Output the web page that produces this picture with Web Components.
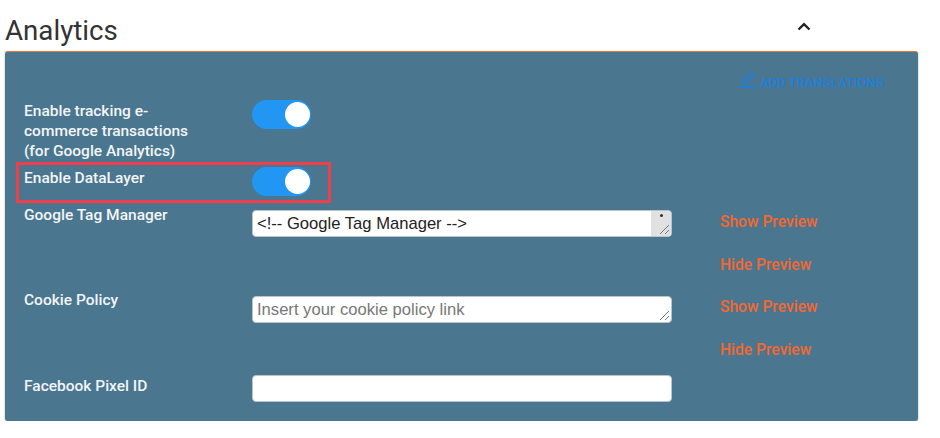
<!DOCTYPE html>
<html lang="en">
<head>
<meta charset="utf-8">
<title>Analytics</title>
<style>
  html, body { margin: 0; padding: 0; background: #fff; }
  body { font-family: Roboto, "Liberation Sans", sans-serif; }
</style>
</head>
<body>
<analytics-panel>
  <span slot="title">Analytics</span>
  <add-translations>ADD TRANSLATIONS</add-translations>

  <form-row style="--row-h:62px; --row-mt:12px">
    <span slot="label">Enable tracking e-commerce transactions (for Google Analytics)</span>
    <toggle-switch></toggle-switch>
  </form-row>

  <form-row style="--row-h:41px; --row-mt:5px" marked>
    <span slot="label">Enable DataLayer</span>
    <toggle-switch></toggle-switch>
  </form-row>

  <form-row style="--row-h:43px; --row-mt:2px; --label-mt:-5px">
    <span slot="label">Google Tag Manager</span>
    <text-box grip scrollbar>&lt;!-- Google Tag Manager --&gt;</text-box>
    <preview-link slot="action">Show Preview</preview-link>
  </form-row>

  <form-row style="--row-h:43px">
    <preview-link slot="action">Hide Preview</preview-link>
  </form-row>

  <form-row style="--row-h:43px; --label-mt:-6px; --action-mt:0px">
    <span slot="label">Cookie Policy</span>
    <text-box grip placeholder>Insert your cookie policy link</text-box>
    <preview-link slot="action">Show Preview</preview-link>
  </form-row>

  <form-row style="--row-h:36px; --action-mt:0px">
    <preview-link slot="action">Hide Preview</preview-link>
  </form-row>

  <form-row style="--row-h:27px">
    <span slot="label">Facebook Pixel ID</span>
    <text-box></text-box>
  </form-row>
</analytics-panel>

<script>
class AnalyticsPanel extends HTMLElement {
  constructor() {
    super();
    this.attachShadow({ mode: 'open' });
    this.shadowRoot.innerHTML = `
      <style>
        :host { display: block; width: 913px; margin-left: 5px; }
        header {
          height: 51px;
          display: flex;
          align-items: flex-end;
          justify-content: space-between;
        }
        h2 {
          margin: 0 0 4px;
          font: 400 27.7px/32px Roboto, "Liberation Sans", sans-serif;
          color: #333;
        }
        svg { display: block; margin: 0 107px 20px 0; }
        section {
          box-sizing: border-box;
          height: 370px;
          padding: 0 19px;
          background: #4a768f;
          border-top: 1px solid #e8762f;
          border-radius: 3px;
          box-shadow: 0 1px 1px rgba(0,0,0,.2), 1px 0 1px rgba(0,0,0,.08), -1px 0 1px rgba(0,0,0,.08);
        }
      </style>
      <header>
        <h2><slot name="title"></slot></h2>
        <svg width="14" height="9" viewBox="0 0 14 9" aria-hidden="true">
          <path d="M1.5 7.5 7 2.2l5.5 5.3" fill="none" stroke="#222" stroke-width="2.4"/>
        </svg>
      </header>
      <section><slot></slot></section>
    `;
  }
}

class AddTranslations extends HTMLElement {
  constructor() {
    super();
    this.attachShadow({ mode: 'open' });
    this.shadowRoot.innerHTML = `
      <style>
        :host {
          display: flex;
          justify-content: flex-end;
          align-items: flex-end;
          gap: 4px;
          height: 36px;
          padding: 0 15px 0 0;
          font: 500 13.1px/16px Roboto, "Liberation Sans", sans-serif;
          color: #1f7fdb;
        }
        svg { display: block; }
        span { margin-bottom: -3px; }
      </style>
      <svg width="15" height="17" viewBox="0 0 15 17" aria-hidden="true">
        <path d="M1.5 13V9.8L9.8 1.5l3 3L4.6 13z" fill="none" stroke="#1f7fdb" stroke-width="1.6"/>
        <path d="M0 16h15" stroke="#1f7fdb" stroke-width="1.8"/>
      </svg>
      <span><slot></slot></span>
    `;
  }
}

class FormRow extends HTMLElement {
  constructor() {
    super();
    this.attachShadow({ mode: 'open' });
    this.shadowRoot.innerHTML = `
      <style>
        :host {
          display: grid;
          grid-template-columns: 228px 420px auto;
          column-gap: 0;
          height: var(--row-h, 40px);
          margin-top: var(--row-mt, 0);
          position: relative;
        }
        .label {
          width: 172px;
          margin-top: var(--label-mt, 1px);
          font: 500 15.5px/20px Roboto, "Liberation Sans", sans-serif;
          color: #f2f5f7;
        }
        .action { padding-left: 48px; margin-top: var(--action-mt, 1px); }
        .mark {
          display: none;
          position: absolute;
          left: -8px;
          top: -5px;
          width: 315px;
          height: 41px;
          box-sizing: border-box;
          border: 3px solid #ee3f4a;
        }
        :host([marked]) .mark { display: block; }
      </style>
      <div class="label"><slot name="label"></slot></div>
      <div><slot></slot></div>
      <div class="action"><slot name="action"></slot></div>
      <div class="mark"></div>
    `;
  }
}

class ToggleSwitch extends HTMLElement {
  constructor() {
    super();
    this.attachShadow({ mode: 'open' });
    this.shadowRoot.innerHTML = `
      <style>
        :host {
          display: flex;
          justify-content: flex-end;
          align-items: center;
          box-sizing: border-box;
          width: 59px;
          height: 29px;
          padding-right: 1px;
          border-radius: 15px;
          background: #2196f3;
        }
        i {
          display: block;
          width: 25px;
          height: 25px;
          border-radius: 50%;
          background: #fff;
        }
      </style>
      <i></i>
    `;
  }
}

class TextBox extends HTMLElement {
  constructor() {
    super();
    this.attachShadow({ mode: 'open' });
    const bar = this.hasAttribute('scrollbar') ? `
      <div class="bar"><b></b></div>` : '';
    const grip = this.hasAttribute('grip') ? `
      <svg class="grip" width="11" height="11" viewBox="0 0 11 11" aria-hidden="true">
        <path d="M1 10 10 1M6 10l4-4" stroke="#777" stroke-width="1" fill="none"/>
      </svg>` : '';
    this.shadowRoot.innerHTML = `
      <style>
        :host {
          display: block;
          position: relative;
          box-sizing: border-box;
          width: 420px;
          height: 27px;
          padding: 0 4px;
          background: #fff;
          border: 1px solid #b9c4cb;
          border-radius: 4px;
          font: 400 16.6px/26px "Liberation Sans", Arial, sans-serif;
          color: #222;
          overflow: hidden;
        }
        :host([placeholder]) { color: #777; }
        .bar {
          position: absolute;
          right: 0;
          top: 0;
          width: 20px;
          height: 100%;
          background: #e1e1e1;
        }
        .bar b {
          position: absolute;
          left: 9px;
          top: 3px;
          width: 3px;
          height: 3px;
          border-radius: 50%;
          background: #333;
        }
        .grip { position: absolute; right: 1px; bottom: 1px; }
      </style>
      <slot></slot>${bar}${grip}
    `;
  }
}

class PreviewLink extends HTMLElement {
  constructor() {
    super();
    this.attachShadow({ mode: 'open' });
    this.shadowRoot.innerHTML = `
      <style>
        :host {
          display: block;
          font: 500 15.6px/22px Roboto, "Liberation Sans", sans-serif;
          color: #f4682f;
          white-space: nowrap;
        }
      </style>
      <slot></slot>
    `;
  }
}

customElements.define('analytics-panel', AnalyticsPanel);
customElements.define('add-translations', AddTranslations);
customElements.define('form-row', FormRow);
customElements.define('toggle-switch', ToggleSwitch);
customElements.define('text-box', TextBox);
customElements.define('preview-link', PreviewLink);
</script>
</body>
</html>
